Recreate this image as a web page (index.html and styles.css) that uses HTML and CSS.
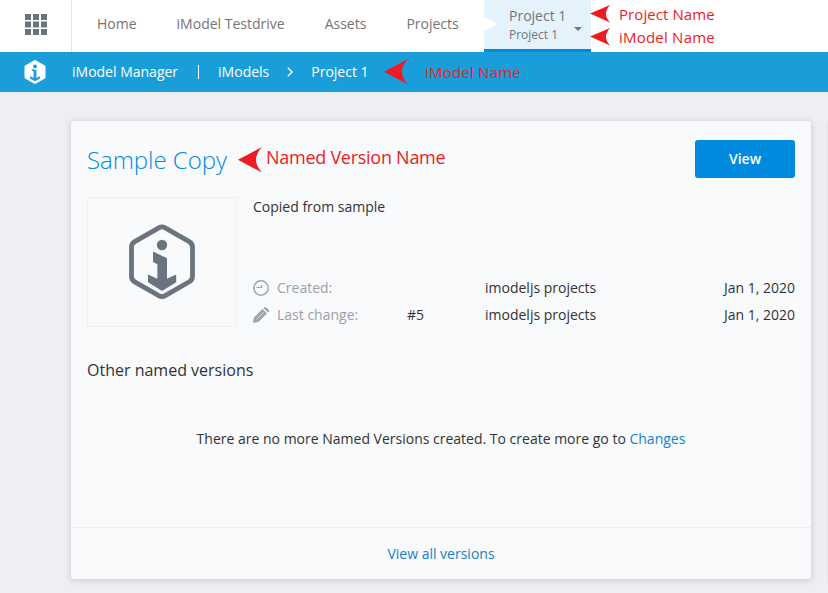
FILE: index.html
```html
<!DOCTYPE html>
<html lang="en">
<head>
<meta charset="utf-8">
<title>iModel Manager</title>
<link rel="stylesheet" href="styles.css">
</head>
<body>
<header class="topbar">
  <div class="launcher">
    <svg width="22" height="22" viewBox="0 0 22 22" fill="#69747f"><path d="M0 0h6v6H0zM8 0h6v6H8zM16 0h6v6h-6zM0 7.500h6v6H0zM8 7.500h6v6H8zM16 7.500h6v6h-6zM0 15h6v6H0zM8 15h6v6H8zM16 15h6v6h-6z"/></svg>
  </div>
  <nav class="nav">
    <a>Home</a><a>iModel Testdrive</a><a>Assets</a><a>Projects</a>
  </nav>
  <div class="context">
    <span class="context-project">Project 1</span>
    <span class="context-model">Project 1</span>
    <span class="caret"></span>
  </div>
</header>
<div class="breadcrumb">
  <svg class="logo" width="22" height="24" viewBox="0 0 22 24"><path d="M11 1.500 20.200 6.700V17.300L11 22.500 1.800 17.300V6.700Z" fill="#fff" stroke="#fff" stroke-width="2.600" stroke-linejoin="round"/><g fill="#1a9ed9"><circle cx="11" cy="6.500" r="1.900"/><path d="M7.800 9 12.400 10v7.900l3.400-1.900v2.700L11 21.300l-4.800-2.600v-2.700l3.400 1.900v-6.500l-1.800-.8z"/></g></svg>
  <span class="crumb-app">iModel Manager</span>
  <span class="crumb-bar"></span>
  <span class="crumb-list">iModels</span>
  <svg class="chevron" width="6" height="10" viewBox="0 0 6 10"><path d="M.8.800 5 5 .8 9.200" fill="none" stroke="#fff" stroke-width="1.400"/></svg>
  <span>Project 1</span>
</div>
<main class="board">
  <section class="card">
    <div class="card-head">
      <h1>Sample Copy</h1>
      <button class="view">View</button>
    </div>
    <div class="summary">
      <div class="thumb">
        <svg width="66" height="76" viewBox="0 0 66 76"><path d="M29.800 3.800Q33 2 36.200 3.800L60.300 17.600Q63.500 19.500 63.500 23.200V52.200Q63.500 55.900 60.300 57.800L36.200 71.600Q33 73.400 29.800 71.600L5.700 57.800Q2.500 55.900 2.500 52.200V23.200Q2.500 19.500 5.700 17.600Z" fill="none" stroke="#69747f" stroke-width="4.800"/><g fill="#69747f"><circle cx="33" cy="21" r="5.200"/><path d="M24 27.500 38 34.200V54.800L47.200 50.500V58.200L33 67 19 58.200V50.500L28.400 54.800V40.300L24 38Z"/></g></svg>
      </div>
      <div class="details">
        <p class="description">Copied from sample</p>
        <div class="meta">
          <svg width="16" height="16" viewBox="0 0 16 16" fill="none" stroke="#9ba5ae"><circle cx="8" cy="8" r="7.200" stroke-width="1.500"/><path d="M3.500 7.500h5V5" stroke-width="1.200"/></svg>
          <span class="label">Created:</span><span></span><span>imodeljs projects</span><span class="date">Jan 1, 2020</span>
        </div>
        <div class="meta">
          <svg width="16" height="16" viewBox="0 0 16 16" fill="#9ba5ae"><path d="M0 16 .9 10.600 9.500 2 14 6.500 5.400 15.100ZM10.400 1.100 11.200.4Q12.300-.4 13.200.4L15.600 2.800Q16.400 3.700 15.600 4.700L14.900 5.600Z"/><path d="m3.500 12.500 7.500-7.500" stroke="#f8fafc" stroke-width=".6"/></svg>
          <span class="label">Last change:</span><span>#5</span><span>imodeljs projects</span><span class="date">Jan 1, 2020</span>
        </div>
      </div>
    </div>
    <h2>Other named versions</h2>
    <p class="empty">There are no more Named Versions created. To create more go to <a>Changes</a></p>
    <footer class="card-foot"><a>View all versions</a></footer>
  </section>
  <div class="next-edge"></div>
</main>
<div class="note note-project"><svg width="20" height="18" viewBox="0 0 20 18"><path d="M0 8.500 20 0Q12 9 20 17.500Z"/></svg><span>Project Name</span></div>
<div class="note note-model"><svg width="20" height="18" viewBox="0 0 20 18"><path d="M0 8.500 20 0Q12 9 20 17.500Z"/></svg><span>iModel Name</span></div>
<div class="note note-crumb"><svg width="24" height="26" viewBox="0 0 24 26"><path d="M0 12.800 24 0Q12 12.800 24 25.600Z"/></svg><span>iModel Name</span></div>
<div class="note note-version"><svg width="24" height="26" viewBox="0 0 24 26"><path d="M0 12.800 24 0Q12 12.800 24 25.600Z"/></svg><span>Named Version Name</span></div>
</body>
</html>
```
FILE: styles.css
```css
* { box-sizing: border-box; }
body {
  margin: 0;
  height: 593px;
  overflow: hidden;
  position: relative;
  background: #edeff3;
  color: #333;
  font: 14px/20px "Open Sans", sans-serif;
}
svg { display: block; flex: none; }
h1, h2, p { margin: 0; }
.topbar { display: flex; height: 52px; background: #fff; color: #757575; }
.launcher { width: 72px; padding: 14px 0 0 25px; border-right: 1px solid #e4e5e8; }
.nav { display: flex; align-items: center; gap: 40px; width: 412px; padding: 0 0 4px 25px; white-space: nowrap; }
.context {
  position: relative;
  display: flex;
  flex-direction: column;
  width: 107px;
  padding: 6px 0 0 25px;
  background: #e4f2fc;
  border-bottom: 3px solid #008be1;
}
.context::before {
  content: "";
  position: absolute;
  left: 0;
  top: 17px;
  border: solid transparent;
  border-width: 7px 0 7px 14px;
  border-left-color: #fff;
}
.context-model { font-size: 12px; line-height: 17px; }
.caret {
  position: absolute;
  right: 9px;
  top: 27px;
  border: solid transparent;
  border-width: 4px 4px 0;
  border-top-color: #757575;
}
.breadcrumb { display: flex; align-items: center; height: 40px; padding-left: 24px; background: #1a9ed9; color: #fff; font-weight: 500; }
.crumb-app { margin-left: 26px; }
.crumb-bar { width: 1px; height: 14px; margin: 0 19px 0 20px; background: #fff; }
.chevron { margin: 0 18px; }
.board { display: flex; justify-content: space-between; padding: 29px 0 0 71px; }
.card {
  flex: none;
  display: flex;
  flex-direction: column;
  width: 740px;
  height: 458px;
  background: #f8fafc;
  border-radius: 3px;
  box-shadow: 0 1px 6px 1px rgba(0, 0, 0, .13);
}
.next-edge { width: 1px; height: 460px; background: #e5e7eb; }
.card-head { display: flex; justify-content: space-between; padding: 19px 16px 0; }
h1 { color: #008be1; font-size: 24px; font-weight: 300; line-height: 40px; letter-spacing: -.05px; }
.view { width: 100px; height: 38px; padding: 0 0 1px; border: 0; border-radius: 3px; background: #008be1; color: #fff; font: 550 14px "Open Sans", sans-serif; }
.summary { display: flex; gap: 16px; height: 130px; margin: 17px 16px 0; }
.thumb { width: 150px; border: 1px solid #f6eeed; padding: 26px 0 0 41px; }
.details { flex: 1; }
.description { height: 77px; }
.meta { display: grid; grid-template-columns: 24px 130px 78px 1fr auto; align-items: center; height: 27px; }
.label { color: #9ba1a7; }
h2 { margin: 32px 16px 0; font-size: 16px; font-weight: 400; line-height: 22px; }
.empty { margin-top: 48px; text-align: center; }
.card a { color: #1481ce; }
.card-foot { display: flex; align-items: center; justify-content: center; height: 52px; margin-top: auto; border-top: 1px solid #f0ecef; }
.note { position: absolute; display: flex; align-items: center; color: #ed1c24; font-family: "Open Sans", sans-serif; font-size: 15px; white-space: nowrap; }
.note svg { fill: #ed1c24; }
.note-project { left: 590px; top: 4px; gap: 9px; }
.note-model { left: 590px; top: 27px; gap: 9px; }
.note-crumb { left: 384px; top: 59px; gap: 17px; }
.note-version { left: 238px; top: 147px; gap: 4px; font-size: 18px; }
.note-project span { letter-spacing: .08px; }
.note-model span, .note-crumb span { letter-spacing: .22px; }
.note-version span { margin-top: -6px; letter-spacing: -.27px; }
```
